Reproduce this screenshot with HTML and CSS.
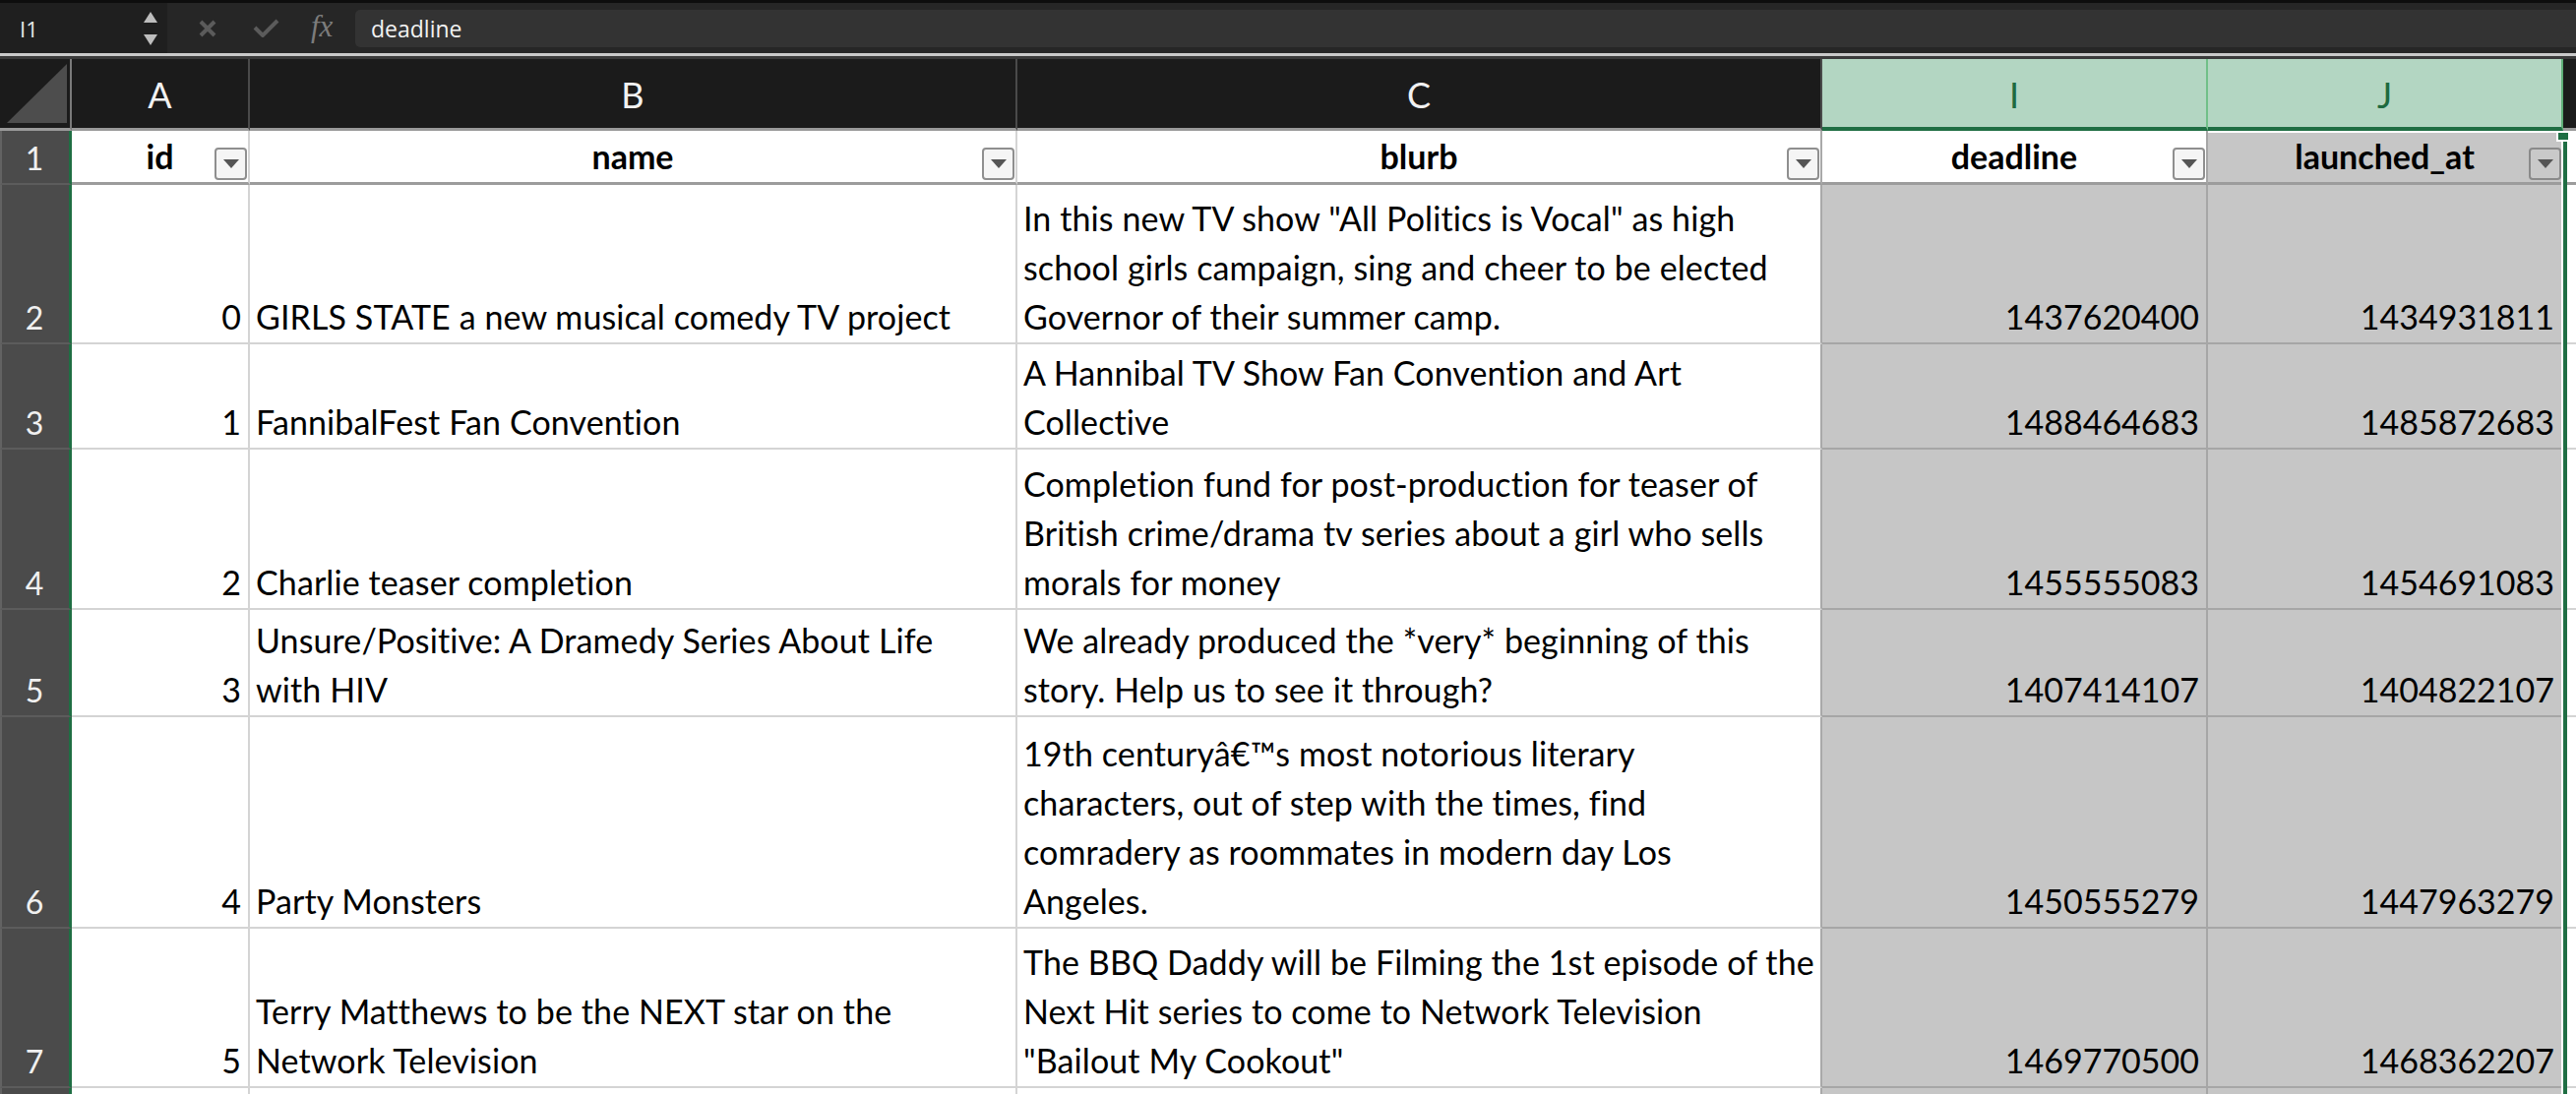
FILE: index.html
```html
<!DOCTYPE html>
<html>
<head>
<meta charset="utf-8">
<link rel="stylesheet" href="styles.css">
</head>
<body>
<div class="app">
  <div class="formula-bar">
    <div class="namebox">
      <span class="ref">I1</span>
      <span class="spin">
        <svg width="14" height="11" viewBox="0 0 14 11"><polygon points="7,0 14,11 0,11" fill="#bdbdbd"/></svg>
        <svg width="14" height="11" viewBox="0 0 14 11"><polygon points="0,0 14,0 7,11" fill="#bdbdbd"/></svg>
      </span>
    </div>
    <div class="fb-tools">
      <svg class="ico-x" width="18" height="18" viewBox="0 0 18 18"><path d="M2 2 L16 16 M16 2 L2 16" stroke="#5b5b5b" stroke-width="4" fill="none"/></svg>
      <svg class="ico-check" width="27" height="19" viewBox="0 0 27 19"><path d="M2 9 L10 17 L25 2" stroke="#5b5b5b" stroke-width="4" fill="none"/></svg>
      <span class="fx">fx</span>
    </div>
    <div class="fb-input">deadline</div>
  </div>

  <div class="sheet">
    <!-- column headers -->
    <div class="corner"><svg width="61" height="60" viewBox="0 0 61 60"><polygon points="0,60 61,0 61,60" fill="#4d4d4d"/></svg></div>
    <div class="ch">A</div>
    <div class="ch">B</div>
    <div class="ch">C</div>
    <div class="ch sel">I</div>
    <div class="ch sel last">J</div>
    <div class="ch rest"></div>

    <!-- row 1 -->
    <div class="rh">1</div>
    <div class="c hd">id<span class="dd"><svg width="16" height="9" viewBox="0 0 16 9"><polygon points="0,0 16,0 8,9" fill="#555"/></svg></span></div>
    <div class="c hd">name<span class="dd"><svg width="16" height="9" viewBox="0 0 16 9"><polygon points="0,0 16,0 8,9" fill="#555"/></svg></span></div>
    <div class="c hd bl">blurb<span class="dd"><svg width="16" height="9" viewBox="0 0 16 9"><polygon points="0,0 16,0 8,9" fill="#555"/></svg></span></div>
    <div class="c hd act">deadline<span class="dd"><svg width="16" height="9" viewBox="0 0 16 9"><polygon points="0,0 16,0 8,9" fill="#555"/></svg></span></div>
    <div class="c hd g">launched_at<span class="dd dg"><svg width="16" height="9" viewBox="0 0 16 9"><polygon points="0,0 16,0 8,9" fill="#555"/></svg></span></div>
    <div class="c hd rest"></div>

    <!-- row 2 -->
    <div class="rh">2</div>
    <div class="c num">0</div>
    <div class="c">GIRLS STATE a new musical comedy TV project</div>
    <div class="c bl">In this new TV show "All Politics is Vocal" as high<br>school girls campaign, sing and cheer to be elected<br>Governor of their summer camp.</div>
    <div class="c num g">1437620400</div>
    <div class="c num g">1434931811</div>
    <div class="c rest"></div>

    <!-- row 3 -->
    <div class="rh">3</div>
    <div class="c num">1</div>
    <div class="c">FannibalFest Fan Convention</div>
    <div class="c bl">A Hannibal TV Show Fan Convention and Art<br>Collective</div>
    <div class="c num g">1488464683</div>
    <div class="c num g">1485872683</div>
    <div class="c rest"></div>

    <!-- row 4 -->
    <div class="rh">4</div>
    <div class="c num">2</div>
    <div class="c">Charlie teaser completion</div>
    <div class="c bl">Completion fund for post-production for teaser of<br>British crime/drama tv series about a girl who sells<br>morals for money</div>
    <div class="c num g">1455555083</div>
    <div class="c num g">1454691083</div>
    <div class="c rest"></div>

    <!-- row 5 -->
    <div class="rh">5</div>
    <div class="c num">3</div>
    <div class="c">Unsure/Positive: A Dramedy Series About Life<br>with HIV</div>
    <div class="c bl">We already produced the *very* beginning of this<br>story. Help us to see it through?</div>
    <div class="c num g">1407414107</div>
    <div class="c num g">1404822107</div>
    <div class="c rest"></div>

    <!-- row 6 -->
    <div class="rh">6</div>
    <div class="c num">4</div>
    <div class="c">Party Monsters</div>
    <div class="c bl">19th centuryâ€™s most notorious literary<br>characters, out of step with the times, find<br>comradery as roommates in modern day Los<br>Angeles.</div>
    <div class="c num g">1450555279</div>
    <div class="c num g">1447963279</div>
    <div class="c rest"></div>

    <!-- row 7 -->
    <div class="rh">7</div>
    <div class="c num">5</div>
    <div class="c">Terry Matthews to be the NEXT star on the<br>Network Television</div>
    <div class="c bl">The BBQ Daddy will be Filming the 1st episode of the<br>Next Hit series to come to Network Television<br>"Bailout My Cookout"</div>
    <div class="c num g">1469770500</div>
    <div class="c num g">1468362207</div>
    <div class="c rest"></div>

    <!-- row 8 (partial, below the fold) -->
    <div class="rh"></div>
    <div class="c num"></div>
    <div class="c"></div>
    <div class="c bl"></div>
    <div class="c num g"></div>
    <div class="c num g"></div>
    <div class="c rest"></div>

    <div class="sel-outline"></div>
    <div class="fill-handle"></div>
  </div>
</div>
</body>
</html>
```

FILE: styles.css
```css
html, body {
  margin: 0;
  padding: 0;
  background: #ffffff;
  overflow: hidden;
}

.app {
  width: 2618px;
  height: 1112px;
  overflow: hidden;
  display: flex;
  flex-direction: column;
  font-family: "Lato", "Liberation Sans", sans-serif;
}

/* ---------- formula bar ---------- */
.formula-bar {
  height: 51px;
  flex: none;
  display: flex;
  align-items: center;
  background: #262626;
  border-top: 3px solid #0d0d0d;
  border-bottom: 3px solid #c9c9c9;
  box-shadow: 0 3px 0 #3a3a3a;
  margin-bottom: 3px;
}

.namebox {
  width: 170px;
  height: 100%;
  flex: none;
  display: flex;
  align-items: center;
  justify-content: space-between;
  box-sizing: border-box;
  padding: 0 10px 0 20px;
  background: #1f1f1f;
}

.ref {
  font-family: "Open Sans", "Lato", sans-serif;
  font-size: 22px;
  color: #e8e8e8;
}

.spin {
  display: flex;
  flex-direction: column;
  gap: 12px;
}

.spin svg { display: block; }

.fb-tools {
  width: 191px;
  flex: none;
  display: flex;
  align-items: center;
  padding-left: 32px;
  box-sizing: border-box;
}

.ico-x { margin-right: 37px; }
.ico-check { margin-right: 32px; }

.fx {
  font-family: "Liberation Serif", serif;
  font-style: italic;
  font-size: 31px;
  color: #7c7c7c;
  line-height: 1;
  margin-top: -4px;
}

.fb-input {
  flex: 1;
  height: 38px;
  background: #333333;
  border-radius: 5px 0 0 5px;
  display: flex;
  align-items: center;
  padding-left: 16px;
  font-family: "Open Sans", "Lato", sans-serif;
  font-size: 23px;
  color: #f2f2f2;
}

/* ---------- sheet grid ---------- */
.sheet {
  position: relative;
  flex: 1;
  display: grid;
  grid-template-columns: 73px 181px 780px 818px 392px 361px 1fr;
  grid-template-rows: 73px 55px 162px 107px 163px 109px 215px 162px 60px;
}

.sheet > div {
  box-sizing: border-box;
}

.corner {
  background: #1b1b1b;
  border-right: 2px solid #7a7a7a;
  border-bottom: 3px solid #9a9a9a;
  display: flex;
  align-items: flex-end;
  justify-content: flex-end;
  padding: 0 3px 5px 0;
}

.corner svg { display: block; }

.ch {
  background: #1b1b1b;
  color: #f2f2f2;
  font-size: 36px;
  display: flex;
  align-items: center;
  justify-content: center;
  border-right: 2px solid #4a4a4a;
  border-bottom: 3px solid #9a9a9a;
  padding-top: 2px;
}

.ch.sel {
  background: #b3d6c2;
  color: #1e6a3f;
  border-bottom: 4px solid #1f6e43;
  border-right: 2px solid #71c088;
}

.ch.sel.last {
  border-right: 2px solid #5fae77;
}

.ch.rest {
  border-right: none;
}

.rh {
  background: #4b4b4b;
  color: #f0f0f0;
  font-size: 32px;
  line-height: 50px;
  display: flex;
  align-items: flex-end;
  justify-content: center;
  border-right: 3px solid #1f6e43;
  border-bottom: 2px solid #5c5c5c;
  border-left: 2px solid #626262;
  padding-right: 2px;
}

.c {
  position: relative;
  background: #ffffff;
  color: #000000;
  font-size: 34px;
  letter-spacing: 0.1px;
  line-height: 50px;
  white-space: nowrap;
  overflow: hidden;
  display: flex;
  flex-direction: column;
  justify-content: flex-end;
  padding: 0 6px 1px 6px;
  border-right: 2px solid #d4d4d4;
  border-bottom: 2px solid #d4d4d4;
}

.c.num {
  text-align: right;
  letter-spacing: 0;
  padding-right: 7px;
}

.c.bl {
  border-right-color: #a9a9a9;
}

.c.g {
  background: #c6c6c6;
  border-right-color: #a6a6a6;
  border-bottom-color: #a6a6a6;
}

.c.rest {
  border-right: none;
}

.c.hd {
  font-weight: 700;
  letter-spacing: 0;
  text-align: center;
  border-bottom: 3px solid #9c9c9c;
  padding-bottom: 1px;
}

.c.hd.act {
  background: #ffffff;
  border-right-color: #a6a6a6;
}

.c.hd.g {
  border-top: 2px solid #ffffff;
}

.dd {
  position: absolute;
  right: 1px;
  bottom: 2px;
  width: 33px;
  height: 33px;
  box-sizing: border-box;
  border: 2px solid #8f8f8f;
  border-radius: 4px;
  background: #f5f5f5;
  display: flex;
  align-items: center;
  justify-content: center;
}

.dd svg { display: block; }

.dd.dg {
  right: 0;
  background: #c9c9c9;
  border-color: #8a8a8a;
}

/* selection outline on the right edge of I:J */
.sel-outline {
  position: absolute;
  left: 1852px;
  top: 84px;
  width: 757px;
  bottom: 0;
  border-right: 4px solid #1f6e43;
  pointer-events: none;
}

.sel-outline::after {
  content: "";
  position: absolute;
  right: 0;
  top: -10px;
  bottom: 0;
  width: 2px;
  background: #ffffff;
}

.fill-handle {
  position: absolute;
  left: 2598px;
  top: 73px;
  width: 12px;
  height: 11px;
  background: #1f6e43;
  border-left: 2px solid #ffffff;
  border-bottom: 2px solid #ffffff;
  border-top: 2px solid #ffffff;
}
```
